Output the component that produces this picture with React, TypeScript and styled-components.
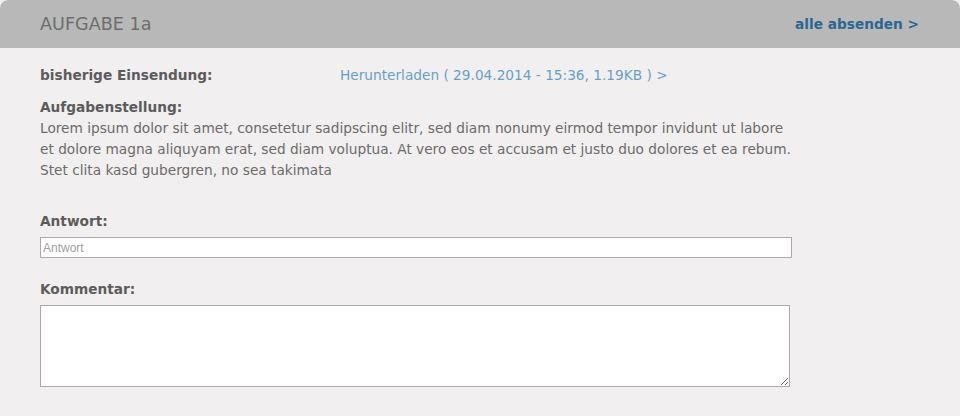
import React from 'react';
import styled, { createGlobalStyle } from 'styled-components';

const Global = createGlobalStyle`
  html, body {
    margin: 0;
    padding: 0;
    background: #f1efef;
  }
  body {
    font-family: 'DejaVu Sans', Verdana, sans-serif;
  }
`;

const Panel = styled.div`
  width: 960px;
  height: 416px;
  background: #f1efef;
  border-radius: 8px 8px 0 0;
  overflow: hidden;
`;

const Header = styled.div`
  height: 48px;
  display: flex;
  align-items: center;
  justify-content: space-between;
  padding: 0 40px;
  background: #b8b8b8;
  border-radius: 8px 8px 0 0;
`;

const Title = styled.h2`
  margin: 0;
  font-size: 17.6px;
  font-weight: 400;
  color: #6d6d6d;
`;

const SendAll = styled.a`
  font-size: 13.7px;
  font-weight: 700;
  color: #2c6594;
  text-decoration: none;
  margin-right: 1px;
`;

const Body = styled.div`
  padding: 16px 40px 0 40px;
  display: flex;
  flex-direction: column;
`;

const Row = styled.div`
  display: grid;
  grid-template-columns: 300px 1fr;
  align-items: center;
  height: 22px;
`;

const Label = styled.div<{ $top?: number }>`
  font-size: 13.7px;
  font-weight: 700;
  color: #5c5c5c;
  margin-top: ${(p) => p.$top ?? 0}px;
  line-height: 20px;
`;

const Link = styled.a`
  font-size: 13.7px;
  color: #6a9fc6;
  text-decoration: none;
`;

const Text = styled.p`
  margin: 1px 0 0 0;
  width: 752px;
  font-size: 13.7px;
  line-height: 21px;
  color: #6b6b6b;
`;

const Input = styled.input`
  box-sizing: border-box;
  width: 752px;
  height: 21px;
  margin-top: 6px;
  padding: 0 2px;
  border: 1px solid #aaaaaa;
  background: #fff;
  font-family: 'Liberation Sans', Arial, sans-serif;
  font-size: 12px;
  outline: none;
  &::placeholder {
    color: #a0a0a0;
  }
`;

const TextArea = styled.textarea`
  box-sizing: border-box;
  width: 750px;
  height: 82px;
  margin-top: 6px;
  border: 1px solid #aaaaaa;
  background: #fff;
  outline: none;
`;

export default function App() {
  return (
    <>
      <Global />
      <Panel>
        <Header>
          <Title>AUFGABE 1a</Title>
          <SendAll href="#">alle absenden &gt;</SendAll>
        </Header>
        <Body>
          <Row>
            <Label>bisherige Einsendung:</Label>
            <Link href="#">Herunterladen ( 29.04.2014 - 15:36, 1.19KB ) &gt;</Link>
          </Row>
          <Label $top={11}>Aufgabenstellung:</Label>
          <Text>
            Lorem ipsum dolor sit amet, consetetur sadipscing elitr, sed diam nonumy eirmod tempor invidunt ut labore
            et dolore magna aliquyam erat, sed diam voluptua. At vero eos et accusam et justo duo dolores et ea rebum.
            Stet clita kasd gubergren, no sea takimata
          </Text>
          <Label $top={30}>Antwort:</Label>
          <Input placeholder="Antwort" />
          <Label $top={21}>Kommentar:</Label>
          <TextArea />
        </Body>
      </Panel>
    </>
  );
}
